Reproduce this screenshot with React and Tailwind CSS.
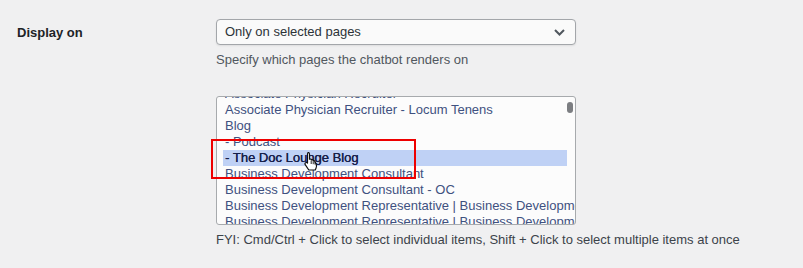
import React from 'react';

const pages = [
  'Associate Physician Recruiter',
  'Associate Physician Recruiter - Locum Tenens',
  'Blog',
  '- Podcast',
  '- The Doc Lounge Blog',
  'Business Development Consultant',
  'Business Development Consultant - OC',
  'Business Development Representative | Business Development',
  'Business Development Representative | Business Development',
];

const selected = 4;

const Pointer = () => (
  <svg width="16" height="20" viewBox="0 0 16 20" className="absolute left-[303px] top-[151px]">
    <path
      d="M5 1.5c.8 0 1.5.7 1.5 1.5v5.2l.2-.1c.6-.3 1.4 0 1.7.6l.1.2c.6-.3 1.4 0 1.7.6l.1.2c.6-.2 1.3.1 1.6.7l1.2 2.6c.6 1.4.6 3-.1 4.3L12.2 19H5.8l-3.6-5.3c-.5-.7-.3-1.6.4-2 .6-.4 1.4-.3 1.8.3l.1.1V3c0-.8.5-1.5 1.3-1.5z"
      fill="#ffffff"
      stroke="#111111"
      strokeWidth="1.2"
      strokeLinejoin="round"
    />
    <path d="M8.2 9.5v3.5M10.2 10.2v3M12 11v2.5" stroke="#111111" strokeWidth="0.9" />
  </svg>
);

export default function App() {
  return (
    <div
      className="w-[803px] h-[268px] bg-[#f0f0f1] overflow-hidden relative flex pt-[19px] text-[13px] text-[#2c3338]"
      style={{ fontFamily: '"Liberation Sans", Arial, sans-serif' }}
    >
      {/* Label */}
      <div className="w-[216px] shrink-0 pl-[17px] pt-[4px] font-bold text-[#1d2327]">Display on</div>

      <div className="w-[360px] flex flex-col">
        {/* Select */}
        <div className="h-[26px] flex items-center justify-between pl-[8px] pr-[10px] bg-[#fafafa] border border-[#a3a6aa] rounded-[4px] shadow-[0_1px_2px_rgba(0,0,0,0.08)]">
          <span>Only on selected pages</span>
          <svg width="11" height="7" viewBox="0 0 11 7">
            <path d="M1 1l4.5 4.5L10 1" fill="none" stroke="#50575e" strokeWidth="2" />
          </svg>
        </div>
        <p className="mt-[5px] text-[#50575e]">Specify which pages the chatbot renders on</p>

        {/* Multi select list */}
        <div className="relative mt-[26px]">
          <div className="h-[129px] bg-[#fcfcfc] border border-[#a7aaad] rounded-[3px] overflow-hidden pl-[6px] pr-[8px]">
            <div className="-mt-[11px]">
              {pages.map((p, i) => (
                <div
                  key={i}
                  className={`h-[16px] leading-[16px] pl-[2px] whitespace-nowrap ${
                    i === selected ? 'bg-[#bfd1f5] text-[#16204a] [text-shadow:0.3px_0_0_#16204a]' : 'text-[#3f5180]'
                  }`}
                >
                  {p}
                </div>
              ))}
            </div>
          </div>
          <div className="absolute right-[3px] top-[6px] w-[6px] h-[11px] rounded-full bg-[#7c7e82]" />
          <div className="absolute -left-[5px] top-[43px] w-[205px] h-[40px] border-2 border-[#ee0000]" />
        </div>

        <p className="mt-[5px] whitespace-nowrap text-[#3c434a]">
          FYI: Cmd/Ctrl + Click to select individual items, Shift + Click to select multiple items at once
        </p>
      </div>

      <Pointer />
    </div>
  );
}
